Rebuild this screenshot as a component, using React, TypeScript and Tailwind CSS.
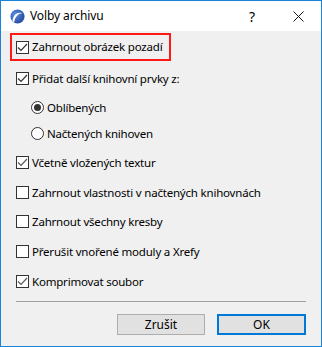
const font = { fontFamily: '"Noto Sans", "Open Sans", sans-serif' };

type BoxProps = { checked?: boolean; light?: boolean };

const CheckBox = ({ checked, light }: BoxProps) => (
  <div className="w-[13px] h-[13px] shrink-0 border border-[#333333] bg-white flex items-center justify-center">
    {checked && (
      <svg width="11" height="11" viewBox="0 0 11 11">
        <path
          d="M1 5.5 L4 8.5 L10 2"
          fill="none"
          stroke={light ? "#5a5a5a" : "#333333"}
          strokeWidth="1.2"
        />
      </svg>
    )}
  </div>
);

const Radio = ({ checked }: { checked?: boolean }) => (
  <div className="w-[13px] h-[13px] shrink-0 rounded-full border border-[#333333] bg-white flex items-center justify-center">
    {checked && <div className="w-[7px] h-[7px] rounded-full bg-[#333333]" />}
  </div>
);

const Row = ({
  children,
  label,
  className,
}: {
  children: React.ReactNode;
  label: string;
  className?: string;
}) => (
  <div className={`flex items-center h-[13px] gap-[3px] ${className ?? ""}`}>
    {children}
    <span className="text-[11.5px] tracking-[-0.2px] leading-none text-black whitespace-nowrap">
      {label}
    </span>
  </div>
);

const AppIcon = () => (
  <svg width="15" height="15" viewBox="0 0 16 16">
    <defs>
      <radialGradient id="g" cx="0.35" cy="0.35" r="0.8">
        <stop offset="0" stopColor="#5b8fe0" />
        <stop offset="1" stopColor="#1a3f9a" />
      </radialGradient>
    </defs>
    <circle cx="8" cy="8" r="7.5" fill="url(#g)" />
    <path d="M2.5 13 C3.5 6 8 3 13 4.5 C9.5 4.5 5.5 7.5 4.5 14 Z" fill="#ffffff" />
  </svg>
);

export default function App() {
  return (
    <div
      className="w-[322px] h-[347px] border border-[#1883d7] bg-[#f0f0f0] flex flex-col"
      style={font}
    >
      <div className="h-[30px] bg-white flex items-center shrink-0">
        <div className="pl-[9px] pr-[5px] flex items-center">
          <AppIcon />
        </div>
        <span className="text-[12px] tracking-[-0.1px] text-black">Volby archivu</span>
        <div className="ml-auto flex h-full">
          <div className="w-[46px] flex items-center justify-center text-[14px] text-black">?</div>
          <div className="w-[46px] flex items-center justify-center">
            <svg width="11" height="11" viewBox="0 0 11 11">
              <path d="M0.5 0.5 L10.5 10.5 M10.5 0.5 L0.5 10.5" stroke="#111" strokeWidth="1" />
            </svg>
          </div>
        </div>
      </div>

      <div className="flex flex-col pl-[15px] pr-[15px]">
        <div className="mt-[2px] -ml-[6px] w-[161px] h-[28px] border-2 border-[#ff1a1a] flex items-center pl-[4px]">
          <Row label="Zahrnout obrázek pozadí">
            <CheckBox checked />
          </Row>
        </div>
        <Row label="Přidat další knihovní prvky z:" className="mt-[11px]">
          <CheckBox checked />
        </Row>
        <Row label="Oblíbených" className="mt-[16px] ml-[15px]">
          <Radio checked />
        </Row>
        <Row label="Načtených knihoven" className="mt-[13px] ml-[15px]">
          <Radio />
        </Row>
        <Row label="Včetně vložených textur" className="mt-[16px]">
          <CheckBox checked light />
        </Row>
        <Row label="Zahrnout vlastnosti v načtených knihovnách" className="mt-[17px]">
          <CheckBox />
        </Row>
        <Row label="Zahrnout všechny kresby" className="mt-[16px]">
          <CheckBox />
        </Row>
        <Row label="Přerušit vnořené moduly a Xrefy" className="mt-[17px]">
          <CheckBox />
        </Row>
        <Row label="Komprimovat soubor" className="mt-[17px]">
          <CheckBox checked light />
        </Row>
        <div className="mt-[13px] h-px bg-[#a0a0a0]" />
        <div className="mt-[12px] flex justify-end gap-[12px]">
          <button className="w-[88px] h-[21px] border border-[#adadad] bg-[#e1e1e1] text-[12px] text-black flex items-center justify-center">
            Zrušit
          </button>
          <button className="w-[89px] h-[21px] border-2 border-[#0078d7] bg-[#e1e1e1] text-[12px] text-black flex items-center justify-center">
            OK
          </button>
        </div>
      </div>
    </div>
  );
}
